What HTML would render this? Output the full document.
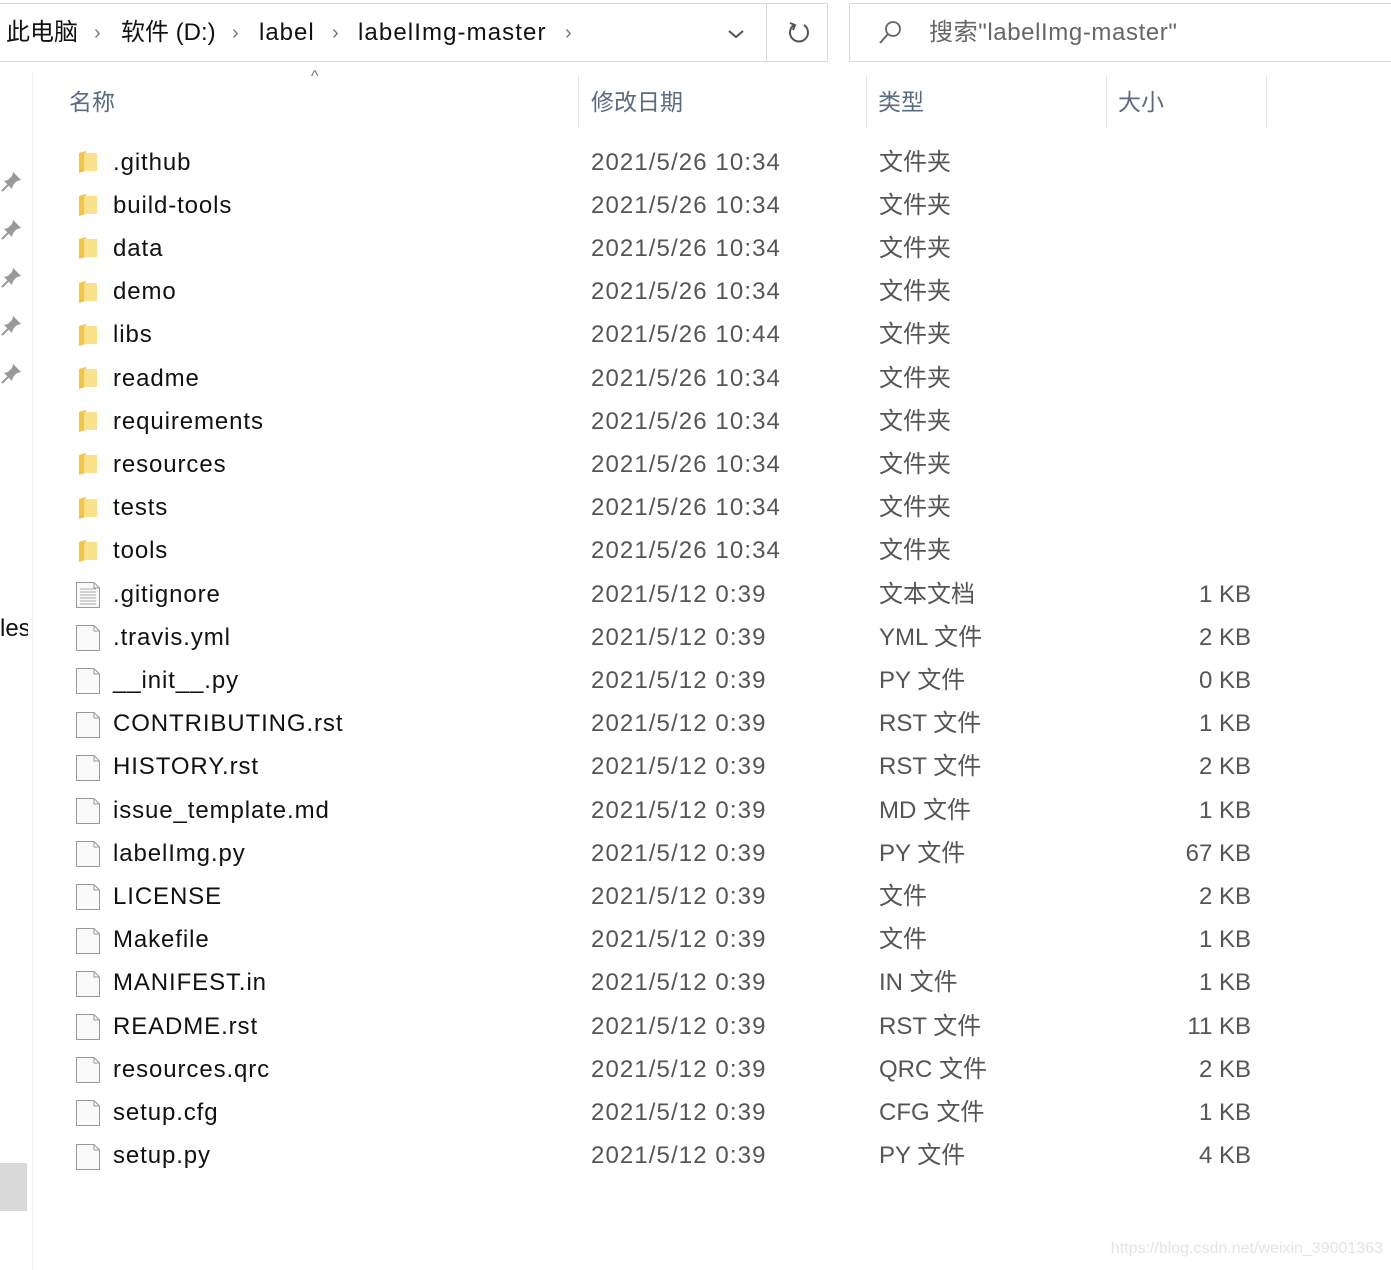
<!DOCTYPE html>
<html><head><meta charset="utf-8"><style>
body{margin:0;width:1391px;height:1270px;background:#fff;position:relative;overflow:hidden;font-family:"Liberation Sans","Noto Sans CJK SC",sans-serif;}
.a{position:absolute;white-space:nowrap}
.r{position:absolute;height:43px;line-height:43px;font-size:24px;white-space:nowrap}
.n{left:113px;color:#111;letter-spacing:0.9px}
.d{left:591px;color:#555;letter-spacing:1.1px}
.t{left:879px;color:#555}
.s{right:140px;color:#555;text-align:right}
.h{font-size:23px;color:#5a6b80;top:84px;line-height:36px}
.sep{position:absolute;top:75px;width:1px;height:52px;background:#e5e5e5}
</style></head><body>
<div class="a" style="left:0;top:3px;width:828px;height:59px;border:1px solid #d9d9d9;border-left:none;box-sizing:border-box"></div>
<div class="a" style="left:766px;top:3px;width:1px;height:59px;background:#d9d9d9"></div>
<div class="a" style="left:849px;top:3px;width:560px;height:59px;border:1px solid #d9d9d9;box-sizing:border-box"></div>
<div class="a" style="left:6px;top:14px;font-size:24px;line-height:38px;color:#111">此电脑</div>
<div class="a" style="left:94px;top:14px;font-size:20px;line-height:38px;color:#777">›</div>
<div class="a" style="left:121px;top:14px;font-size:24px;line-height:38px;color:#111">软件 (D:)</div>
<div class="a" style="left:232px;top:14px;font-size:20px;line-height:38px;color:#777">›</div>
<div class="a" style="left:259px;top:14px;font-size:24px;line-height:38px;color:#111;letter-spacing:1px">label</div>
<div class="a" style="left:332px;top:14px;font-size:20px;line-height:38px;color:#777">›</div>
<div class="a" style="left:358px;top:14px;font-size:24px;line-height:38px;color:#111;letter-spacing:1.1px">labelImg-master</div>
<div class="a" style="left:565px;top:14px;font-size:20px;line-height:38px;color:#777">›</div>
<svg class="a" style="left:726px;top:26px" width="20" height="16"><path d="M3 5 L10 11 L17 5" fill="none" stroke="#555" stroke-width="2"/></svg>
<svg class="a" style="left:785px;top:20px" width="28" height="28"><path d="M9 5 A9 9 0 1 0 19 5" fill="none" stroke="#555" stroke-width="2"/><path d="M5 3 L10 5 L8 10" fill="none" stroke="#555" stroke-width="2"/></svg>
<svg class="a" style="left:876px;top:19px" width="28" height="28"><circle cx="17" cy="10" r="7" fill="none" stroke="#666" stroke-width="1.8"/><path d="M12 15 L4 24" stroke="#666" stroke-width="2"/></svg>
<div class="a" style="left:929px;top:14px;font-size:24px;line-height:38px;color:#666;letter-spacing:0.6px">搜索"labelImg-master"</div>
<div class="a" style="left:32px;top:72px;width:1px;height:1198px;background:#f0f0f0"></div>
<div class="a" style="left:0;top:1163px;width:27px;height:48px;background:#d9d9d9"></div>
<div class="a" style="left:0;top:612px;font-size:24px;line-height:34px;color:#111;width:28px;overflow:hidden">les</div>
<div id="pins"></div>
<div class="a" style="left:311px;top:68px;font-size:16px;color:#777">^</div>
<div class="a h" style="left:69px">名称</div>
<div class="a h" style="left:591px">修改日期</div>
<div class="a h" style="left:878px">类型</div>
<div class="a h" style="left:1118px">大小</div>
<div class="sep" style="left:578px"></div><div class="sep" style="left:866px"></div><div class="sep" style="left:1106px"></div><div class="sep" style="left:1266px"></div>
<div id="rows"></div>
<div class="a" style="right:8px;top:1240px;font-size:16px;color:#e4e4e4">https://blog.csdn.net/weixin_39001363</div>
<script>
var p="";for(var k=0;k<5;k++){p+='<svg class="a" style="left:1px;top:'+(170+k*48)+'px" width="22" height="22"><path d="M12 2 L20 10 L16 11 L12 15 L11 19 L3 11 L7 10 L11 6 Z" fill="#999"/><path d="M7 15 L1 21" stroke="#999" stroke-width="2"/></svg>';}
document.getElementById("pins").innerHTML=p;
var R=[[".github","2021/5/26 10:34","文件夹","",0],["build-tools","2021/5/26 10:34","文件夹","",0],["data","2021/5/26 10:34","文件夹","",0],["demo","2021/5/26 10:34","文件夹","",0],["libs","2021/5/26 10:44","文件夹","",0],["readme","2021/5/26 10:34","文件夹","",0],["requirements","2021/5/26 10:34","文件夹","",0],["resources","2021/5/26 10:34","文件夹","",0],["tests","2021/5/26 10:34","文件夹","",0],["tools","2021/5/26 10:34","文件夹","",0],
[".gitignore","2021/5/12 0:39","文本文档","1 KB",2],[".travis.yml","2021/5/12 0:39","YML 文件","2 KB",1],["__init__.py","2021/5/12 0:39","PY 文件","0 KB",1],["CONTRIBUTING.rst","2021/5/12 0:39","RST 文件","1 KB",1],["HISTORY.rst","2021/5/12 0:39","RST 文件","2 KB",1],["issue_template.md","2021/5/12 0:39","MD 文件","1 KB",1],["labelImg.py","2021/5/12 0:39","PY 文件","67 KB",1],["LICENSE","2021/5/12 0:39","文件","2 KB",1],["Makefile","2021/5/12 0:39","文件","1 KB",1],["MANIFEST.in","2021/5/12 0:39","IN 文件","1 KB",1],["README.rst","2021/5/12 0:39","RST 文件","11 KB",1],["resources.qrc","2021/5/12 0:39","QRC 文件","2 KB",1],["setup.cfg","2021/5/12 0:39","CFG 文件","1 KB",1],["setup.py","2021/5/12 0:39","PY 文件","4 KB",1]];
var h="";
R.forEach(function(r,i){var c=162+i*43.2,t=c-21.5;
h+='<div class="r n" style="top:'+t+'px">'+r[0]+'</div><div class="r d" style="top:'+t+'px">'+r[1]+'</div><div class="r t" style="top:'+t+'px">'+r[2]+'</div><div class="r s" style="top:'+t+'px">'+r[3]+'</div>';
var y=c-13;
if(r[4]==0)h+='<svg class="a" style="left:76px;top:'+y+'px" width="24" height="26"><path d="M3 4 L10 2 L10 22 L3 24 Z" fill="#f3c545"/><path d="M8 4 L21 4 L21 22 L8 22 Z" fill="#fbe28a"/></svg>';
else{h+='<svg class="a" style="left:75px;top:'+y+'px" width="26" height="28"><path d="M1.5 1.5 L19 1.5 L24.5 7 L24.5 26.5 L1.5 26.5 Z" fill="#fafafa" stroke="#9a9a9a"/><path d="M19 1.5 L19 7 L24.5 7" fill="none" stroke="#9a9a9a"/>';
if(r[4]==2)for(var k=0;k<6;k++)h+='<path d="M5 '+(8+k*3)+' L21 '+(8+k*3)+'" stroke="#aaa"/>';h+='</svg>';}
});
document.getElementById("rows").innerHTML=h;
</script>
</body></html>
